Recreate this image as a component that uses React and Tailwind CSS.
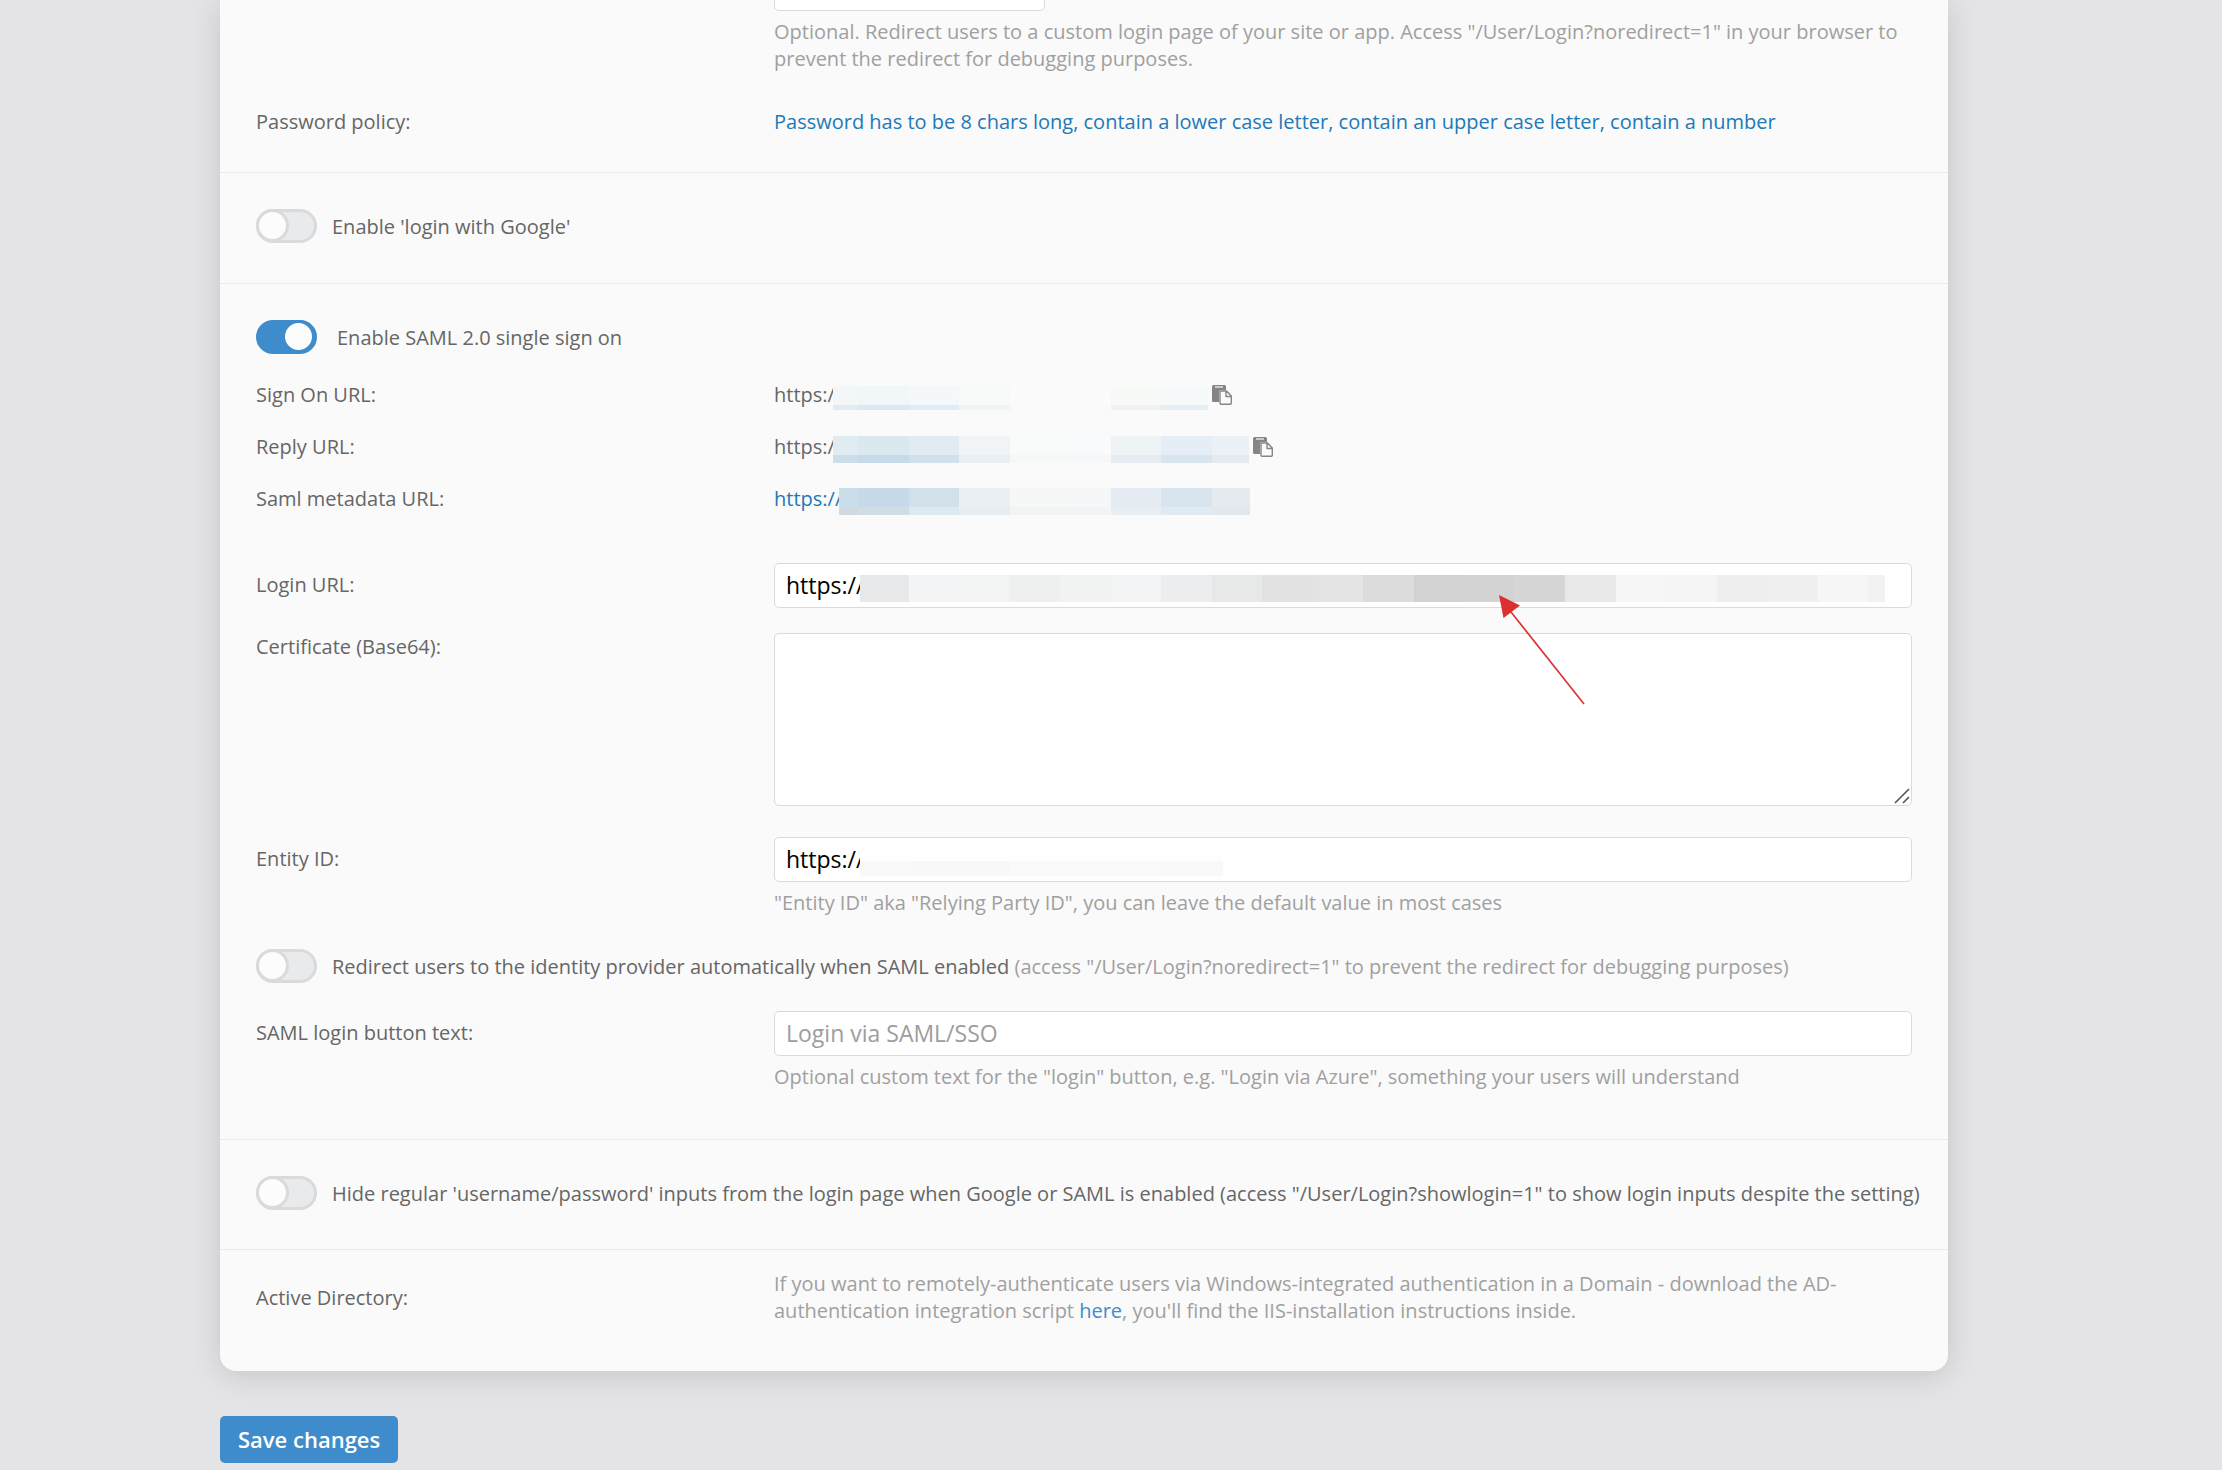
import { useState } from 'react'

const SIGN_ON_CELLS = [
  ['w-[25px]', 'bg-[#f4f7f8]', 'bg-[#e0ebf2]'],
  ['w-[51px]', 'bg-[#f1f6f9]', 'bg-[#dae8ef]'],
  ['w-[50px]', 'bg-[#f5f8fa]', 'bg-[#e0ebf3]'],
  ['w-[51px]', 'bg-[#f8faf9]', 'bg-[#f0f4f7]'],
  ['w-[51px]', 'bg-[#fafbfa]', 'bg-[#f9fbfb]'],
  ['w-[50px]', 'bg-[#fafbfa]', 'bg-[#f8fafb]'],
  ['w-[50px]', 'bg-[#f7f9f7]', 'bg-[#f0f2f3]'],
  ['w-[47px]', 'bg-[#f6f9fa]', 'bg-[#e5eef5]'],
]

const REPLY_CELLS = [
  ['w-[25px]', 'bg-[#e0ebf2]', 'bg-[#cbdeea]'],
  ['w-[51px]', 'bg-[#dae8ef]', 'bg-[#c6dae9]'],
  ['w-[50px]', 'bg-[#e0ebf3]', 'bg-[#d0e1ec]'],
  ['w-[51px]', 'bg-[#f0f4f7]', 'bg-[#e9eff2]'],
  ['w-[51px]', 'bg-[#f9fbfb]', 'bg-[#f6f8f8]'],
  ['w-[50px]', 'bg-[#f8fafb]', 'bg-[#f6f7f9]'],
  ['w-[50px]', 'bg-[#eef3f5]', 'bg-[#e6ecf1]'],
  ['w-[51px]', 'bg-[#e5edf6]', 'bg-[#d8e5ef]'],
  ['w-[37px]', 'bg-[#ebf1f4]', 'bg-[#e4eaef]'],
]

const METADATA_CELLS = [
  ['w-[19px]', 'bg-[#cbdeea]', 'bg-[#d1dae0]'],
  ['w-[51px]', 'bg-[#c6dae9]', 'bg-[#d1dde5]'],
  ['w-[50px]', 'bg-[#d0e1ec]', 'bg-[#dde9f0]'],
  ['w-[51px]', 'bg-[#e9eff2]', 'bg-[#e6eef1]'],
  ['w-[51px]', 'bg-[#f6f8f8]', 'bg-[#f2f3f3]'],
  ['w-[50px]', 'bg-[#f6f7f9]', 'bg-[#f3f3f4]'],
  ['w-[50px]', 'bg-[#e4ebf2]', 'bg-[#e9eef3]'],
  ['w-[51px]', 'bg-[#d8e5ef]', 'bg-[#e1eaf0]'],
  ['w-[38px]', 'bg-[#e4eaf0]', 'bg-[#e3e8ec]'],
]

const LOGIN_CELLS = [
  ['w-[49px]', 'bg-[#e6e8e9]'],
  ['w-[50px]', 'bg-[#f3f4f6]'],
  ['w-[51px]', 'bg-[#f2f3f3]'],
  ['w-[50px]', 'bg-[#eef0ef]'],
  ['w-[51px]', 'bg-[#f1f3f3]'],
  ['w-[50px]', 'bg-[#f2f4f6]'],
  ['w-[51px]', 'bg-[#ebedef]'],
  ['w-[50px]', 'bg-[#e7e9e8]'],
  ['w-[51px]', 'bg-[#e2e2e2]'],
  ['w-[50px]', 'bg-[#e4e4e4]'],
  ['w-[51px]', 'bg-[#dcdcdc]'],
  ['w-[50px]', 'bg-[#d2d2d2]'],
  ['w-[51px]', 'bg-[#d3d3d3]'],
  ['w-[50px]', 'bg-[#d6d6d6]'],
  ['w-[51px]', 'bg-[#e8e8e8]'],
  ['w-[50px]', 'bg-[#f6f6f6]'],
  ['w-[51px]', 'bg-[#f5f5f5]'],
  ['w-[51px]', 'bg-[#eeeeee]'],
  ['w-[50px]', 'bg-[#f0f0f0]'],
  ['w-[50px]', 'bg-[#f6f6f6]'],
  ['w-[17px]', 'bg-[#f2f2f2]'],
]

const ENTITY_CELLS = [
  ['w-[49px]', 'bg-[#fefefe]', 'bg-[#f9f9f9]'],
  ['w-[101px]', 'bg-[#fefefe]', 'bg-[#f8f8f8]'],
  ['w-[151px]', 'bg-[#fefefe]', 'bg-[#fafafa]'],
  ['w-[62px]', 'bg-[#fefefe]', 'bg-[#f9f9f9]'],
]

// Hidden part of a value, two shades per column
function Mosaic({ cells, top = 'h-[19px]', bottom = 'h-2', className = '' }) {
  return (
    <span aria-hidden="true" className={`flex shrink-0 ${className}`}>
      {cells.map(([width, upper, lower], i) => (
        <span key={i} className={width}>
          <span className={`block ${top} ${upper}`} />
          {lower && <span className={`block ${bottom} ${lower}`} />}
        </span>
      ))}
    </span>
  )
}

function Section({ className = '', children }) {
  return <section className={`border-t border-[#e8e9ea] px-9 ${className}`}>{children}</section>
}

function Row({ label, htmlFor, align = 'items-start', className = '', children }) {
  const Label = htmlFor ? 'label' : 'div'
  return (
    <div className={`flex ${align} ${className}`}>
      <Label htmlFor={htmlFor} className="w-[518px] shrink-0">{label}</Label>
      <div className="min-w-0 flex-1">{children}</div>
    </div>
  )
}

function Toggle({ defaultChecked = false, className = '', children }) {
  const [on, setOn] = useState(defaultChecked)
  return (
    <label className={`flex items-center ${on ? 'gap-5' : 'gap-[15px]'} ${className}`}>
      <span className="relative flex h-[34px] w-[61px] shrink-0">
        <input
          type="checkbox"
          checked={on}
          onChange={(e) => setOn(e.target.checked)}
          className="h-full w-full appearance-none rounded-full border-3 border-[#d9dadc] bg-[#e9eaec] checked:border-[#3e8ccb] checked:bg-[#3e8ccb]"
        />
        <span
          className={`pointer-events-none absolute top-0 size-[33px] rounded-full border-3 bg-[#fcfcfc] ${
            on ? 'right-0.5 border-[#3e8ccb]' : 'left-0 border-[#d9dadc]'
          }`}
        />
      </span>
      <span>{children}</span>
    </label>
  )
}

function TextInput({ className = '', ...props }) {
  return (
    <input
      type="text"
      className={`block h-[45px] w-full rounded-[5px] border border-[#d9dadb] bg-white px-[11px] pb-0.5 text-[23px] text-black placeholder:text-[#9d9d9d] ${className}`}
      {...props}
    />
  )
}

function Help({ children, className = '' }) {
  return <p className={`text-[#a0a0a0] ${className}`}>{children}</p>
}

function CopyButton({ label }) {
  return (
    <button type="button" aria-label={label} className="ml-1 shrink-0">
      <svg className="size-5" viewBox="0 0 20 20">
        <path d="M1.500 0h11a1.500 1.500 0 0 1 1.500 1.500V5H9.500A2.500 2.500 0 0 0 7 7.500V17H1.500A1.500 1.500 0 0 1 0 15.500v-14A1.500 1.500 0 0 1 1.500 0z" fill="#858585" />
        <path d="M3 2h8" stroke="#fafafa" strokeWidth="1.200" />
        <path d="M9 6h5.500L19.300 11v7.300a1 1 0 0 1-1 1H9a1 1 0 0 1-1-1V7a1 1 0 0 1 1-1zM14 6v5.500h5" fill="#fafafa" stroke="#858585" strokeWidth="1.400" strokeLinejoin="round" />
      </svg>
    </button>
  )
}

export default function App() {
  return (
    <div className="min-h-screen bg-[#e4e4e6] pr-[274px] pl-[220px] font-['Open_Sans',sans-serif] text-xl leading-[27px] text-[#666666]">
      <main className="rounded-b-2xl bg-[#fafafa] shadow-[0_4px_30px_rgba(0,0,0,0.14)]">
        <div className="px-9 pb-[37px]">
          <Row label="">
            <div className="flex h-[11px] items-end overflow-hidden">
              <TextInput aria-label="Custom login page" className="max-w-[271px] shrink-0" />
            </div>
            <Help className="mt-[7px]">
              Optional. Redirect users to a custom login page of your site or app. Access "/User/Login?noredirect=1" in your browser to prevent the redirect for debugging purposes.
            </Help>
          </Row>
          <Row label="Password policy:" className="mt-9">
            <a href="#" className="text-[#2079b8]">
              Password has to be 8 chars long, contain a lower case letter, contain an upper case letter, contain a number
            </a>
          </Row>
        </div>

        <Section className="py-9">
          <Toggle className="mb-1">Enable 'login with Google'</Toggle>
        </Section>

        <Section className="pt-9 pb-[49px]">
          <Toggle defaultChecked>Enable SAML 2.0 single sign on</Toggle>

          <Row label="Sign On URL:" className="mt-[27px]">
            <div className="flex h-[27px] items-center">
              <span className="w-[59px] shrink-0">https:/</span>
              <Mosaic cells={SIGN_ON_CELLS} bottom="h-[5px]" className="mt-1.5" />
              <CopyButton label="Copy sign on URL" />
            </div>
          </Row>
          <Row label="Reply URL:" className="mt-[25px]">
            <div className="flex h-[27px] items-center">
              <span className="w-[59px] shrink-0">https:/</span>
              <Mosaic cells={REPLY_CELLS} className="mt-1.5" />
              <CopyButton label="Copy reply URL" />
            </div>
          </Row>
          <Row label="Saml metadata URL:" className="mt-[25px]">
            <a href="#" className="flex h-[27px] items-center text-[#2079b8]">
              <span className="w-[65px] shrink-0">https://</span>
              <Mosaic cells={METADATA_CELLS} className="mt-1.5" />
            </a>
          </Row>

          <Row label={<span className="block pt-2">Login URL:</span>} htmlFor="login-url" className="mt-[51px]">
            <div className="relative">
              <TextInput id="login-url" defaultValue="https://" />
              <div className="pointer-events-none absolute top-3 left-[86px]">
                <Mosaic cells={LOGIN_CELLS} top="h-[27px]" />
              </div>
              <svg className="pointer-events-none absolute top-8 left-[724px] z-10 h-[112px] w-[88px]" viewBox="0 0 88 112">
                <path d="M13 17L86 109" stroke="#dc2f2f" strokeWidth="1.600" />
                <path d="M1 0l21 10.500L5.500 23z" fill="#dc2f2f" />
              </svg>
            </div>
          </Row>

          <Row label="Certificate (Base64):" htmlFor="certificate" className="mt-[25px]">
            <div className="relative">
              <textarea
                id="certificate"
                className="block h-[173px] w-full resize-none rounded-[5px] border border-[#d9dadb] bg-white px-[11px] py-2 text-[23px] text-black"
              />
              <svg className="pointer-events-none absolute right-0.5 bottom-0.5 size-4" viewBox="0 0 16 16">
                <path d="M1 15L15 1M9 15l6-6" stroke="#555555" strokeWidth="1.600" />
              </svg>
            </div>
          </Row>

          <Row label={<span className="block pt-2">Entity ID:</span>} htmlFor="entity-id" className="mt-[31px]">
            <div className="relative">
              <TextInput id="entity-id" defaultValue="https://" />
              <div className="pointer-events-none absolute top-1.5 left-[86px]">
                <Mosaic cells={ENTITY_CELLS} top="h-[18px]" bottom="h-[15px]" />
              </div>
            </div>
            <Help className="mt-[7px]">"Entity ID" aka "Relying Party ID", you can leave the default value in most cases</Help>
          </Row>

          <Toggle className="mt-[33px]">
            Redirect users to the identity provider automatically when SAML enabled{' '}
            <span className="text-[#a0a0a0]">(access "/User/Login?noredirect=1" to prevent the redirect for debugging purposes)</span>
          </Toggle>

          <Row label={<span className="block pt-2">SAML login button text:</span>} htmlFor="button-text" className="mt-7">
            <TextInput id="button-text" placeholder="Login via SAML/SSO" />
            <Help className="mt-[7px]">
              Optional custom text for the "login" button, e.g. "Login via Azure", something your users will understand
            </Help>
          </Row>
        </Section>

        <Section className="py-9">
          <Toggle className="mb-[3px] 2xl:whitespace-nowrap">
            Hide regular 'username/password' inputs from the login page when Google or SAML is enabled (access "/User/Login?showlogin=1" to show login inputs despite the setting)
          </Toggle>
        </Section>

        <Section className="pt-5 pb-[47px]">
          <Row label="Active Directory:" align="items-center">
            <Help>
              If you want to remotely-authenticate users via Windows-integrated authentication in a Domain - download the AD-authentication integration script{' '}
              <a href="#" className="text-[#3e8ccb]">here</a>, you'll find the IIS-installation instructions inside.
            </Help>
          </Row>
        </Section>
      </main>

      <button type="button" className="mt-[45px] h-[47px] rounded-[5px] bg-[#3e8ccb] px-[18px] text-[22px] font-semibold text-white">
        Save changes
      </button>
    </div>
  )
}
